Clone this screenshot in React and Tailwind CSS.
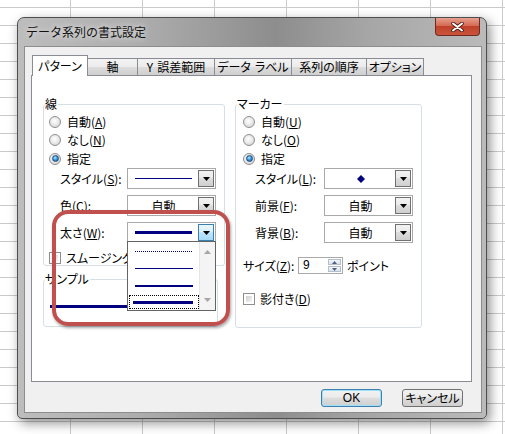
import React from 'react';

const font = "font-['Noto_Sans_CJK_JP','Noto_Sans_CJK_SC',sans-serif]";

const U = ({ children }) => <span className="underline underline-offset-[1px]">{children}</span>;

const Radio = ({ checked }) => (
  <span className="w-[12px] h-[12px] rounded-full border border-[#8f8f8f] bg-[radial-gradient(circle_at_45%_40%,#ffffff_0%,#e8e8e8_50%,#c9c9c9_100%)] flex items-center justify-center shrink-0">
    {checked && (
      <span className="w-[7px] h-[7px] rounded-full border border-[#1f4e7a] bg-[radial-gradient(circle_at_40%_35%,#b9ecff_0%,#3b9be0_45%,#0b4f94_100%)]" />
    )}
  </span>
);

const Check = () => (
  <span className="w-[12px] h-[12px] border border-[#8f8f8f] bg-white p-[2px] shrink-0 flex">
    <span className="flex-1 bg-[linear-gradient(135deg,#cfcfcf,#f6f6f6)]" />
  </span>
);

const Tri = ({ color = '#000000' }) => (
  <svg width="7" height="4" viewBox="0 0 7 4">
    <path d="M0 0H7L3.5 4Z" fill={color} />
  </svg>
);

const DropBtn = ({ hover }) => (
  <div
    className={`w-[16px] shrink-0 flex items-center justify-center border ${
      hover
        ? 'border-[#3c7fb1] bg-[linear-gradient(#eaf6fd_0%,#d9f0fc_45%,#bee6fd_50%,#a7d9f5_100%)]'
        : 'border-[#707070] bg-[linear-gradient(#f2f2f2_0%,#ebebeb_45%,#dddddd_50%,#cfcfcf_100%)]'
    }`}
  >
    <Tri />
  </div>
);

const Combo = ({ children, hover }) => (
  <div className="w-[89px] h-[21px] border border-[#a9a9a9] bg-white flex p-[1px]">
    <div className="flex-1 flex items-center justify-center">{children}</div>
    <DropBtn hover={hover} />
  </div>
);

const Line = ({ h = 1, w = 57, dotted }) =>
  dotted ? (
    <div
      className="h-[1px] bg-[repeating-linear-gradient(90deg,#000080_0_1px,transparent_1px_2px)]"
      style={{ width: w }}
    />
  ) : (
    <div className="bg-[#000080]" style={{ width: w, height: h }} />
  );

const Group = ({ label, className, children }) => (
  <div className={`relative border border-[#d5dfe5] rounded-[3px] ${className}`}>
    <span className="absolute -top-[8px] left-[1px] bg-white pr-[1px] leading-[14px]">{label}</span>
    {children}
  </div>
);

const RadioRow = ({ checked, children, h = 'h-[18px]' }) => (
  <div className={`${h} flex items-center gap-[6px]`}>
    <Radio checked={checked} />
    <span>{children}</span>
  </div>
);

const tabs = [
  { label: 'パターン', w: 'w-[56px]', active: true },
  { label: '軸', w: 'w-[51px]' },
  { label: <>Y<span className="ml-[4px]">誤差範囲</span></>, key: 'y', w: 'w-[78px]' },
  { label: <>データ<span className="ml-[4px]">ラベル</span></>, key: 'dl', w: 'w-[78px]' },
  { label: '系列の順序', w: 'w-[76px]' },
  { label: 'オプション', w: 'w-[58px]' },
];

const Button = ({ children, primary }) => (
  <div
    className={`w-[61px] h-[18px] rounded-[3px] border flex items-center justify-center ${
      primary
        ? 'border-[#3c7fb1] shadow-[inset_0_0_0_1px_#9ee0fa] bg-[linear-gradient(#f2f2f2_0%,#ebebeb_45%,#dddddd_50%,#cfcfcf_100%)]'
        : 'border-[#707070] bg-[linear-gradient(#f2f2f2_0%,#ebebeb_45%,#dddddd_50%,#cfcfcf_100%)]'
    }`}
  >
    {children}
  </div>
);

export default function App() {
  return (
    <div
      className={`${font} [font-feature-settings:'palt'] whitespace-nowrap relative w-[505px] h-[434px] overflow-hidden text-[12px] leading-[14px] text-black bg-white [background-image:repeating-linear-gradient(90deg,transparent_0_70px,#cacaca_70px_71px,transparent_71px_72px),repeating-linear-gradient(180deg,transparent_0_7px,#cacaca_7px_8px,transparent_8px_18px)] pl-[17px] pt-[17px]`}
    >
      {/* window */}
      <div className="w-[470px] h-[402px] border border-[#4e4e4e] rounded-t-[7px] rounded-b-[5px] shadow-[3px_4px_12px_rgba(0,0,0,0.45)] bg-[linear-gradient(90deg,#bdbdbd_0%,#aeaeae_25%,#8d8d8d_55%,#a6a6a6_75%,#bababa_100%)] flex flex-col">
        <div className="h-[28px] flex justify-between shrink-0">
          <span className="pl-[8px] self-center text-[#111] [font-feature-settings:normal] [text-shadow:0_0_6px_#ffffff]">
            データ系列の書式設定
          </span>
          <div className="mr-[6px] w-[45px] h-[18px] rounded-b-[4px] border border-t-0 border-[#6e2a20] bg-[linear-gradient(#e6a08f_0%,#d56b55_45%,#c0412b_50%,#c9553b_100%)] flex items-center justify-center">
            <svg width="13" height="10" viewBox="0 0 13 10">
              <path d="M2 1.5L11 8.5M11 1.5L2 8.5" stroke="#4a1a12" strokeWidth="3.6" strokeLinecap="round" />
              <path d="M2 1.5L11 8.5M11 1.5L2 8.5" stroke="#ffffff" strokeWidth="2" strokeLinecap="round" />
            </svg>
          </div>
        </div>

        {/* client area */}
        <div className="ml-[6px] w-[458px] h-[367px] border border-[#8d8d8d] bg-[#f0f0f0] flex flex-col">
          <div className="pl-[7px] pt-[8px] flex items-end h-[28px] shrink-0">
            {tabs.map((t) =>
              t.active ? (
                <div
                  key={t.key || t.label}
                  className={`${t.w} h-[21px] -mb-[1px] relative z-10 border border-b-0 border-[#898c95] bg-white flex items-center justify-center`}
                >
                  {t.label}
                </div>
              ) : (
                <div
                  key={t.key || t.label}
                  className={`${t.w} h-[17px] -ml-[1px] border border-b-0 border-[#898c95] bg-[linear-gradient(#f3f3f3_0%,#ebebeb_50%,#dddddd_51%,#cfcfcf_100%)] flex items-center justify-center`}
                >
                  {t.label}
                </div>
              )
            )}
          </div>

          {/* tab panel */}
          <div className="ml-[6px] w-[441px] h-[307px] border border-[#898c95] bg-white pl-[11px] pt-[28px] flex gap-[10px]">
            <div className="w-[182px] flex flex-col">
              <Group label="線" className="h-[162px]">
                <div className="pt-[8px] pl-[5px]">
                  <RadioRow>
                    自動(<U>A</U>)
                  </RadioRow>
                  <RadioRow>
                    なし(<U>N</U>)
                  </RadioRow>
                  <RadioRow checked h="h-[19px]">
                    指定
                  </RadioRow>
                </div>
                <div className="pl-[16px] flex flex-col gap-[6px]">
                  <div className="flex items-center h-[21px]">
                    <span className="w-[67px]">
                      スタイル(<U>S</U>):
                    </span>
                    <Combo>
                      <Line />
                    </Combo>
                  </div>
                  <div className="flex items-center h-[21px]">
                    <span className="w-[67px]">
                      色(<U>C</U>):
                    </span>
                    <Combo>自動</Combo>
                  </div>
                  <div className="flex items-center h-[21px]">
                    <span className="w-[67px]">
                      太さ(<U>W</U>):
                    </span>
                    <Combo hover>
                      <Line h={3} />
                    </Combo>
                  </div>
                </div>
                <div className="pl-[5px] mt-[9px] flex items-center gap-[5px] h-[12px]">
                  <Check />
                  <span>スムージング(</span>
                </div>
              </Group>

              <Group label="サンプル" className="mt-[13px] w-[175px] h-[48px]">
                <div className="pt-[25px] pl-[6px]">
                  <Line h={3} w={100} />
                </div>
              </Group>
            </div>

            <Group label="マーカー" className="w-[187px] h-[224px]">
              <div className="pt-[8px] pl-[7px]">
                <RadioRow>
                  自動(<U>U</U>)
                </RadioRow>
                <RadioRow>
                  なし(<U>O</U>)
                </RadioRow>
                <RadioRow checked h="h-[19px]">
                  指定
                </RadioRow>
              </div>
              <div className="pl-[19px] flex flex-col gap-[6px]">
                <div className="flex items-center h-[21px]">
                  <span className="w-[69px]">
                    スタイル(<U>L</U>):
                  </span>
                  <Combo>
                    <svg width="8" height="8" viewBox="0 0 8 8">
                      <path d="M4 0L8 4L4 8L0 4Z" fill="#000080" />
                    </svg>
                  </Combo>
                </div>
                <div className="flex items-center h-[21px]">
                  <span className="w-[69px]">
                    前景(<U>F</U>):
                  </span>
                  <Combo>自動</Combo>
                </div>
                <div className="flex items-center h-[21px]">
                  <span className="w-[69px]">
                    背景(<U>B</U>):
                  </span>
                  <Combo>自動</Combo>
                </div>
              </div>
              <div className="pl-[7px] mt-[14px] flex items-center h-[17px]">
                <span className="w-[55px]">
                  サイズ(<U>Z</U>):
                </span>
                <div className="w-[45px] h-[17px] border border-[#a9a9a9] bg-white flex">
                  <span className="flex-1 pl-[4px] leading-[15px] font-['Liberation_Sans',sans-serif]">9</span>
                  <div className="w-[15px] flex flex-col p-[1px] gap-[1px]">
                    <div className="flex-1 border border-[#b5bfcc] bg-[linear-gradient(#f4f7fb,#d8e1ec)] flex items-center justify-center">
                      <svg width="5" height="3" viewBox="0 0 5 3">
                        <path d="M0 3L2.5 0L5 3Z" fill="#4d6185" />
                      </svg>
                    </div>
                    <div className="flex-1 border border-[#b5bfcc] bg-[linear-gradient(#f4f7fb,#d8e1ec)] flex items-center justify-center">
                      <svg width="5" height="3" viewBox="0 0 5 3">
                        <path d="M0 0L2.5 3L5 0Z" fill="#4d6185" />
                      </svg>
                    </div>
                  </div>
                </div>
                <span className="ml-[4px]">ポイント</span>
              </div>
              <div className="pl-[7px] mt-[19px] flex items-center gap-[5px] h-[12px]">
                <Check />
                <span>
                  影付き(<U>D</U>)
                </span>
              </div>
            </Group>
          </div>

          <div className="mt-[7px] pr-[18px] flex justify-end gap-[20px]">
            <Button primary>
              <span className="font-['Liberation_Sans',sans-serif]">OK</span>
            </Button>
            <Button>キャンセル</Button>
          </div>
        </div>
      </div>

      {/* open drop-down list */}
      <div className="absolute left-[127px] top-[241px] w-[89px] h-[70px] border border-[#646464] bg-white flex">
        <div className="flex-1 flex flex-col pl-[1px] pt-[1px]">
          <div className="h-[17px] flex items-center pl-[6px]">
            <Line dotted w={58} />
          </div>
          <div className="h-[17px] flex items-center pl-[6px]">
            <Line w={58} />
          </div>
          <div className="h-[17px] flex items-center pl-[6px]">
            <Line h={2} w={58} />
          </div>
          <div className="h-[14px] mt-[1px] flex items-center pl-[4px] outline outline-1 outline-dotted outline-black -outline-offset-1">
            <Line h={3} w={60} />
          </div>
        </div>
        <div className="w-[16px] bg-[#f4f4f4] border-l border-[#e6e6e6] flex flex-col justify-between items-center py-[8px]">
          <svg width="7" height="4" viewBox="0 0 7 4">
            <path d="M0 4L3.5 0L7 4Z" fill="#a6a6a6" />
          </svg>
          <Tri color="#a6a6a6" />
        </div>
      </div>

      {/* annotation */}
      <div className="absolute left-[52px] top-[210px] w-[178px] h-[116px] border-[4px] border-[#c0504d] rounded-[16px] shadow-[1px_2px_3px_rgba(0,0,0,0.35)]" />
    </div>
  );
}
